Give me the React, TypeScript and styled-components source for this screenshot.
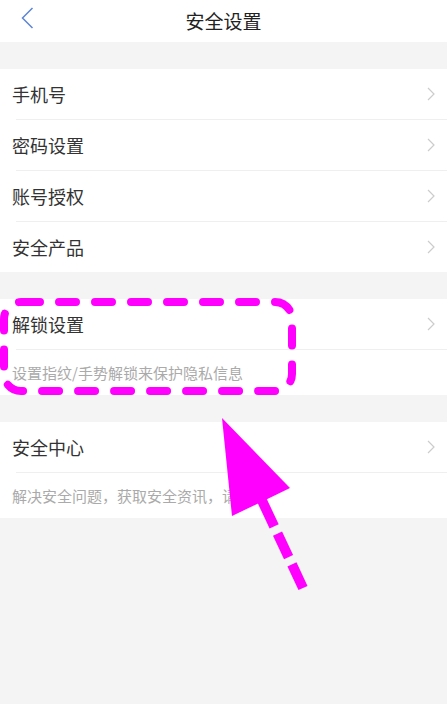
import styled, { createGlobalStyle } from "styled-components";

const GlobalStyle = createGlobalStyle`
  html, body {
    margin: 0;
    padding: 0;
    background: #f4f4f4;
    font-family: "Noto Sans CJK SC", "Noto Sans", sans-serif;
  }
`;

interface Item {
  title: string;
  desc?: string;
}

const mainItems: Item[] = [
  { title: "手机号" },
  { title: "密码设置" },
  { title: "账号授权" },
  { title: "安全产品" },
];

const extraGroups: Item[] = [
  { title: "解锁设置", desc: "设置指纹/手势解锁来保护隐私信息" },
  { title: "安全中心", desc: "解决安全问题，获取安全资讯，请点击" },
];

function Chevron() {
  return (
    <svg width="8" height="14" viewBox="0 0 8 14">
      <path d="M1 1 L7 7 L1 13" fill="none" stroke="#cccccc" strokeWidth="1.2" />
    </svg>
  );
}

function App() {
  return (
    <>
      <GlobalStyle />
      <Page>
        <Header>
          <Back>
            <svg width="13" height="22" viewBox="0 0 13 22">
              <path d="M11.5 1 L1.5 11 L11.5 21" fill="none" stroke="#5d86d6" strokeWidth="1.5" />
            </svg>
          </Back>
          <Title>安全设置</Title>
        </Header>

        <Group>
          {mainItems.map((item, index) => (
            <Row key={index} divider={index < mainItems.length - 1}>
              <RowTitle>{item.title}</RowTitle>
              <Chevron />
            </Row>
          ))}
        </Group>

        {extraGroups.map((item, index) => (
          <Group key={index}>
            <Row divider>
              <RowTitle>{item.title}</RowTitle>
              <Chevron />
            </Row>
            <Desc>{item.desc}</Desc>
          </Group>
        ))}

        <Annotation width="447" height="704" viewBox="0 0 447 704">
          <rect
            x="4"
            y="302"
            width="288"
            height="89"
            rx="17"
            fill="none"
            stroke="#ff00ff"
            strokeWidth="8"
            strokeLinecap="round"
            strokeDasharray="17 19"
            strokeDashoffset="-2"
          />
          <polygon points="222,418 290,488 232,516" fill="#ff00ff" />
          <line
            x1="303"
            y1="588"
            x2="258"
            y2="492"
            stroke="#ff00ff"
            strokeWidth="10"
            strokeDasharray="26 8 26 8 40"
          />
        </Annotation>
      </Page>
    </>
  );
}

export default App;

const Page = styled.div`
  position: relative;
  width: 447px;
  min-height: 704px;
  background: #f4f4f4;
  overflow: hidden;
`;

const Header = styled.div`
  position: relative;
  height: 42px;
  background: #ffffff;
  display: flex;
  align-items: center;
  justify-content: center;
  margin-bottom: 27px;
`;

const Back = styled.div`
  position: absolute;
  left: 21px;
  top: 7px;
  display: flex;
`;

const Title = styled.div`
  font-size: 19px;
  color: #222;
  line-height: 1;
  margin-top: -2px;
`;

const Group = styled.div`
  background: #ffffff;
  margin-bottom: 27px;
`;

const Row = styled.div<{ divider?: boolean }>`
  height: 50px;
  display: flex;
  align-items: center;
  justify-content: space-between;
  padding: 0 12px 0 12px;
  position: relative;
  margin-bottom: ${(p) => (p.divider ? "1px" : "0")};

  &::after {
    content: "";
    display: ${(p) => (p.divider ? "block" : "none")};
    position: absolute;
    left: 16px;
    right: 0;
    bottom: -1px;
    height: 1px;
    background: #efefef;
  }
`;

const RowTitle = styled.span`
  font-size: 18px;
  color: #333;
`;

const Desc = styled.div`
  height: 45px;
  display: flex;
  align-items: center;
  padding-left: 12px;
  font-size: 15px;
  color: #aaaaaa;
  white-space: nowrap;
  overflow: hidden;
`;

const Annotation = styled.svg`
  position: absolute;
  left: 0;
  top: 0;
  pointer-events: none;
`;
